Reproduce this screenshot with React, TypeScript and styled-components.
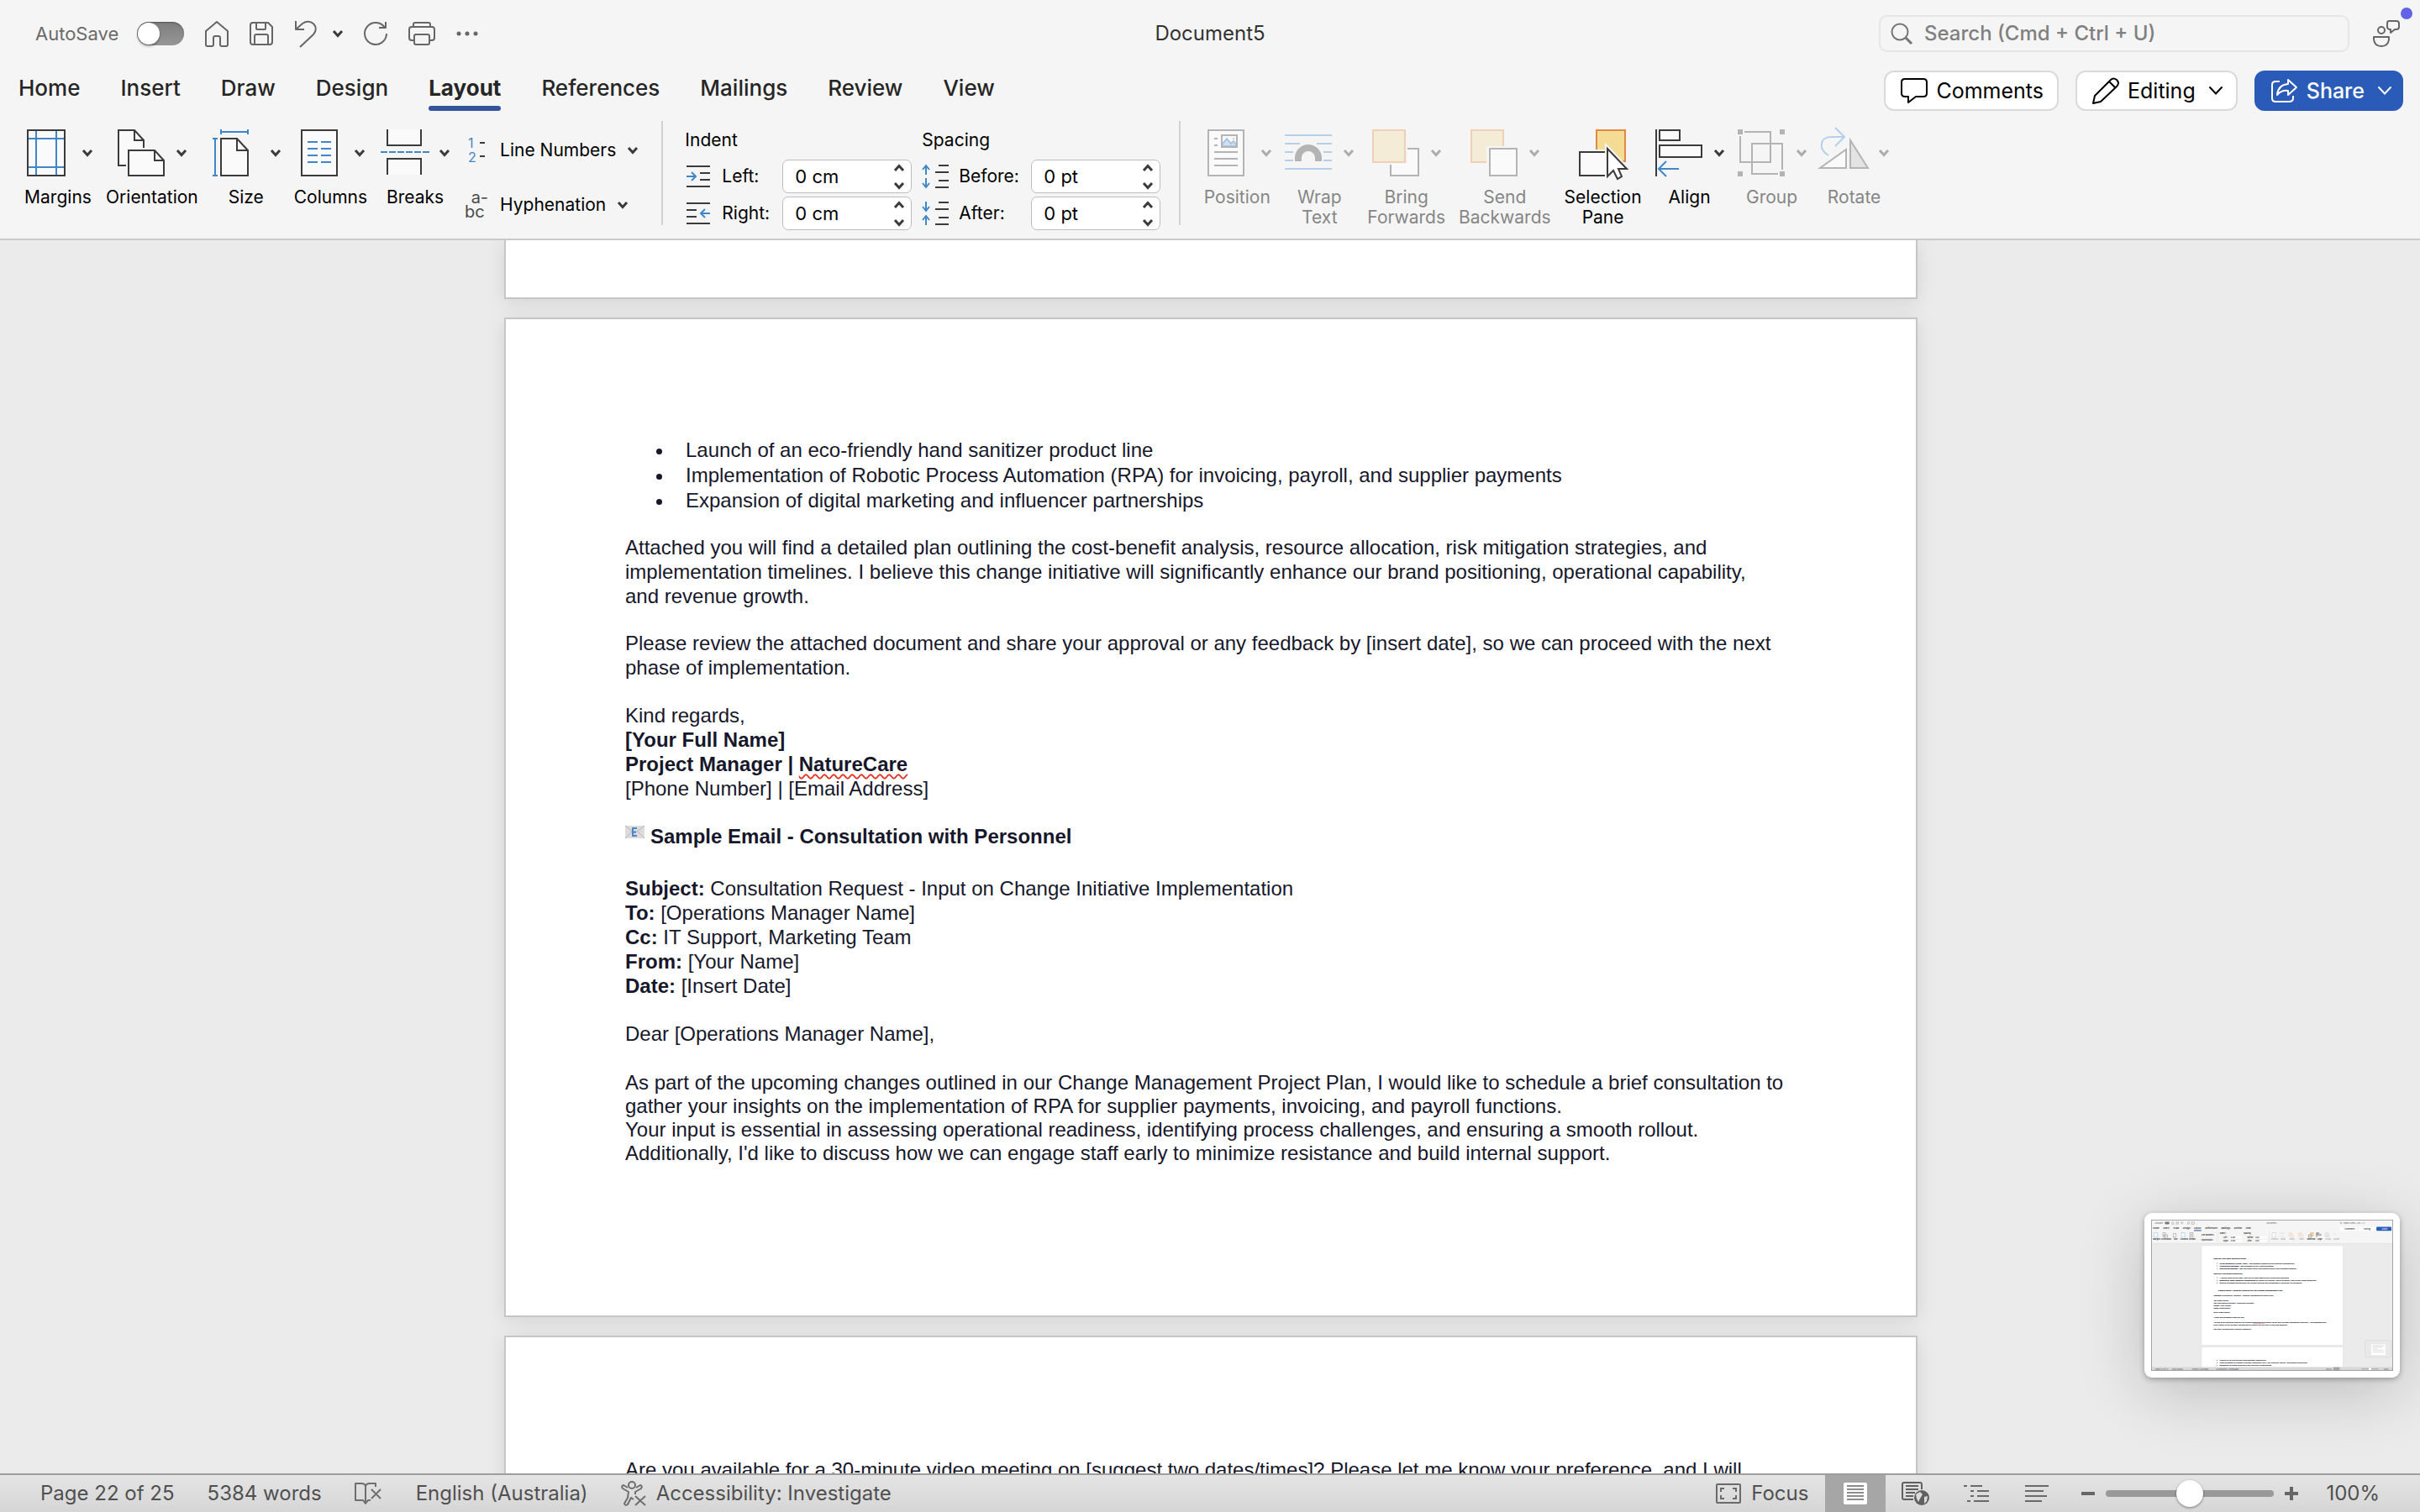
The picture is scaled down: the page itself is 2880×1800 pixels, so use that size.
import React from "react";
import styled, { createGlobalStyle } from "styled-components";

const INK = "#3b3b3b";
const BLUE = "#3f87c9";
const UI_FONT = 'Inter, "Liberation Sans", sans-serif';
const DOC_FONT = '"Liberation Sans", Arial, sans-serif';

const GlobalStyle = createGlobalStyle`
  * { box-sizing: border-box; }
  body { margin: 0; background: #ebebeb; font-family: ${UI_FONT}; }
  button, input { font: inherit; color: inherit; }
  button { background: none; border: 0; padding: 0; }
  svg { display: block; flex: none; overflow: visible; }
`;

/* ---------- shell ---------- */

const Shell = styled.div`
  position: relative;
  display: flex;
  flex-direction: column;
  height: 100vh;
  overflow: hidden;
`;

const Header = styled.header`
  flex: none;
  background: #f5f5f5;
  border-bottom: 2px solid #c9c9c9;
`;

const TitleBar = styled.div`
  display: grid;
  grid-template-columns: 1fr auto 1fr;
  align-items: center;
  height: 80px;
  padding: 0 24px;
`;

const QuickAccess = styled.div`
  display: flex;
  align-items: center;
  gap: 25px;
  padding-left: 18px;
  color: #666;
`;

const AutoSave = styled.label`
  display: flex;
  align-items: center;
  gap: 22px;
  font-size: 22px;
  line-height: 28px;
  color: #6a6a6a;
`;

const Toggle = styled.input`
  appearance: none;
  width: 56px;
  height: 28px;
  margin: 0;
  border-radius: 14px;
  background: linear-gradient(#7d7d7d, #979797);
  box-shadow: inset 0 1px 2px rgba(0, 0, 0, 0.35);
  &::before {
    content: "";
    display: block;
    width: 26px;
    height: 26px;
    margin: 1px;
    border-radius: 50%;
    background: #fff;
    box-shadow: 0 2px 3px rgba(0, 0, 0, 0.35);
  }
`;

const IconButton = styled.button`
  display: flex;
  align-items: center;
  gap: 18px;
`;

const DocTitle = styled.h1`
  margin: 0;
  font-size: 24px;
  line-height: 28px;
  font-weight: 400;
  color: #333;
`;

const TitleRight = styled.div`
  display: flex;
  align-items: center;
  justify-content: flex-end;
  gap: 28px;
`;

const SearchBox = styled.label`
  display: flex;
  align-items: center;
  gap: 14px;
  width: 560px;
  height: 44px;
  padding: 0 12px;
  border: 2px solid #e6e6e6;
  border-radius: 10px;
  color: #757575;
`;

const SearchInput = styled.input`
  flex: 1;
  min-width: 0;
  padding: 0;
  border: 0;
  outline: 0;
  background: none;
  font-size: 24px;
  line-height: 28px;
  font-weight: 500;
  &::placeholder {
    color: #808080;
    opacity: 1;
  }
`;

const Presence = styled.button`
  position: relative;
  color: #666;
`;

const Dot = styled.span`
  position: absolute;
  top: -15px;
  right: -15px;
  width: 14px;
  height: 14px;
  border-radius: 50%;
  background: #6262e6;
`;

/* ---------- tabs ---------- */

const TabBar = styled.div`
  display: flex;
  justify-content: space-between;
  padding: 4px 20px 0 22px;
`;

const Tabs = styled.nav`
  display: flex;
  gap: 48px;
`;

const Tab = styled.button<{ $active?: boolean }>`
  display: flex;
  flex-direction: column;
  gap: 5px;
  padding-top: 5px;
  font-size: 26px;
  line-height: 32px;
  font-weight: ${(p) => (p.$active ? 700 : 500)};
  color: #262626;
  &::after {
    content: "";
    width: 100%;
    height: 6px;
    border-radius: 3px;
    background: ${(p) => (p.$active ? "#34549a" : "transparent")};
  }
`;

const Actions = styled.div`
  display: flex;
  gap: 20px;
`;

const ActionButton = styled.button<{ $primary?: boolean }>`
  display: flex;
  align-items: center;
  gap: 10px;
  height: 48px;
  padding: 0 ${(p) => (p.$primary ? 12 : 16)}px 0 18px;
  border: 2px solid ${(p) => (p.$primary ? "#2b5bb9" : "#dadada")};
  border-radius: 12px;
  background: ${(p) => (p.$primary ? "#2b5bb9" : "#fff")};
  color: ${(p) => (p.$primary ? "#fff" : "#000")};
  font-size: 25px;
  line-height: 32px;
  font-weight: ${(p) => (p.$primary ? 500 : 400)};
  svg + span + svg {
    margin-left: 6px;
  }
`;

/* ---------- ribbon ---------- */

const Ribbon = styled.div`
  display: flex;
  align-items: flex-start;
  padding: 12px 28px 10px;
`;

const ToolGroup = styled.div`
  display: flex;
  gap: 16px;
  padding-top: 10px;
`;

const Tool = styled.button`
  display: flex;
  flex-direction: column;
  align-items: center;
  gap: 13px;
  font-size: 21px;
  line-height: 24px;
  color: #000;
  &:disabled {
    color: #868686;
  }
`;

const ToolFace = styled.span`
  display: flex;
  align-items: center;
  gap: 10px;
`;

const Separator = styled.div`
  flex: none;
  width: 2px;
  height: 124px;
  margin: 0 26px 0 22px;
  background: #d2d2d2;
`;

const SmallTools = styled.div`
  display: flex;
  flex-direction: column;
  align-items: flex-start;
  gap: 33px;
  padding: 19px 6px 0 18px;
`;

const SmallTool = styled.button`
  display: flex;
  align-items: center;
  gap: 14px;
  height: 32px;
  font-size: 21px;
  line-height: 24px;
  color: #000;
`;

const Glyph = styled.span`
  width: 28px;
  font-size: 20px;
  line-height: 17px;
  text-align: right;
  color: #4a4a4a;
  white-space: pre;
`;

const Fields = styled.div`
  display: flex;
  gap: 12px;
  padding-top: 11px;
  font-size: 21px;
  line-height: 24px;
  color: #000;
`;

const FieldGroup = styled.fieldset`
  display: flex;
  flex-direction: column;
  gap: 4px;
  margin: 0;
  padding: 0;
  border: 0;
`;

const Legend = styled.legend`
  padding: 0;
  margin-bottom: 11px;
`;

const Field = styled.div`
  display: flex;
  align-items: center;
`;

const FieldLabel = styled.label<{ $width: number }>`
  width: ${(p) => p.$width}px;
  margin-left: 12px;
`;

const Stepper = styled.div`
  display: flex;
  justify-content: space-between;
  width: 154px;
  height: 40px;
  padding: 0 8px 0 14px;
  border: 1px solid #bdbdbd;
  border-radius: 7px;
  background: #fff;
`;

const StepInput = styled.input`
  width: 100px;
  padding: 0;
  border: 0;
  outline: 0;
  background: none;
  font-size: 22px;
  line-height: 28px;
`;

const StepButtons = styled.div`
  display: flex;
  flex-direction: column;
  justify-content: center;
  gap: 13px;
`;

/* ---------- document ---------- */

const Canvas = styled.main`
  flex: 1;
  min-height: 0;
  overflow: hidden;
  display: flex;
  flex-direction: column;
  align-items: center;
  gap: 22px;
  padding-left: 2px;
  background: #ebebeb;
`;

const Page = styled.article<{ $tail?: boolean }>`
  flex: none;
  width: 1682px;
  max-width: 100%;
  height: ${(p) => (p.$tail ? "70px" : "1190px")};
  padding: ${(p) => (p.$tail ? "0" : "141px 142px")};
  border: 2px solid #c5c5c5;
  border-top-width: ${(p) => (p.$tail ? 0 : 2)}px;
  background: #fff;
  box-shadow: 0 4px 22px rgba(0, 0, 0, 0.1);
  font-family: ${DOC_FONT};
  font-size: 24px;
  line-height: 29px;
  color: #17172b;
  white-space: nowrap;
`;

const Bullets = styled.ul`
  margin: 0;
  padding: 0 0 0 58px;
  line-height: 30px;
`;

const Bullet = styled.li`
  padding-left: 14px;
`;

const Para = styled.p<{ $space?: number; $tight?: boolean }>`
  margin: ${(p) => p.$space ?? 27}px 0 0;
  line-height: ${(p) => (p.$tight ? 28 : 29)}px;
`;

const Heading = styled.h2`
  display: flex;
  gap: 7px;
  margin: 28px 0 0;
  font-size: 24px;
  line-height: 29px;
  font-weight: 700;
`;

const Misspelt = styled.span`
  text-decoration: underline wavy #e0392b 2px;
  text-underline-offset: 3px;
  text-decoration-skip-ink: none;
`;

/* ---------- status bar ---------- */

const StatusBar = styled.footer`
  flex: none;
  display: flex;
  justify-content: space-between;
  height: 46px;
  padding: 0 48px;
  border-top: 2px solid #9e9e9e;
  background: linear-gradient(#e4e4e4, #d6d6d6);
  font-size: 24px;
  line-height: 28px;
  color: #505050;
`;

const StatusSide = styled.div<{ $gap: number }>`
  display: flex;
  align-items: center;
  gap: ${(p) => p.$gap}px;
`;

const StatusButton = styled.button`
  display: flex;
  align-items: center;
  gap: 12px;
`;

const ViewButton = styled.button<{ $active?: boolean }>`
  display: flex;
  align-items: center;
  justify-content: center;
  width: 72px;
  height: 44px;
  background: ${(p) => (p.$active ? "#a6a6a6" : "none")};
`;

const Zoom = styled.div`
  display: flex;
  align-items: center;
  gap: 12px;
`;

const Slider = styled.input`
  appearance: none;
  width: 200px;
  height: 32px;
  margin: 0;
  background: none;
  &::-webkit-slider-runnable-track {
    height: 8px;
    border-radius: 4px;
    background: #999;
  }
  &::-webkit-slider-thumb {
    appearance: none;
    width: 32px;
    height: 32px;
    margin-top: -12px;
    border-radius: 50%;
    background: #fff;
    box-shadow: 0 1px 3px rgba(0, 0, 0, 0.45);
  }
`;

const ZoomValue = styled.span`
  margin-left: 20px;
`;

/* ---------- floating preview ---------- */

const Preview = styled.figure`
  position: absolute;
  right: 24px;
  bottom: 160px;
  width: 304px;
  height: 196px;
  margin: 0;
  padding: 8px;
  border-radius: 9px;
  background: #fff;
  box-shadow: 0 2px 6px rgba(0, 0, 0, 0.3), 0 16px 80px rgba(0, 0, 0, 0.2);
`;

const Drawing = styled.svg`
  overflow: hidden;
`;

/* ---------- icons ---------- */

const Chevron = ({ up, color = INK }: { up?: boolean; color?: string }) => (
  <svg width="12" height="8" fill="none" stroke={color} strokeWidth="3">
    <path d={up ? "M1 7 6 1.5 11 7" : "M1 1 6 6.5 11 1"} />
  </svg>
);

const ThinChevron = ({ color }: { color: string }) => (
  <svg width="16" height="10" fill="none" stroke={color} strokeWidth="2" strokeLinecap="round">
    <path d="M1 1 8 8.500 15 1" />
  </svg>
);

const Box = ({ children, stroke = INK }: { children: React.ReactNode; stroke?: string }) => (
  <svg width="60" height="56" fill="none" stroke={stroke} strokeWidth="2">
    {children}
  </svg>
);

const MarginsIcon = () => (
  <Box>
    <rect x="5" y="1" width="44" height="54" fill="#fafafa" />
    <path stroke={BLUE} d="M15 2V54M39 2V54M6 11H48M6 45H48" />
    <rect x="5" y="1" width="44" height="54" />
  </Box>
);

const OrientationIcon = () => (
  <Box>
    <path fill="#fafafa" stroke="none" d="M10 43H1V1H20L31 13V22Z" />
    <path d="M10 43H1V1H20L31 13V22" />
    <path d="M20 1V13H31" />
    <path fill="#fafafa" d="M13 25H44L55 37V55H13Z" />
    <path d="M44 25V37H55" />
  </Box>
);

const SizeIcon = () => (
  <Box>
    <path stroke={BLUE} d="M11 3H43M11 0V6M43 0V6M4 11V55M1 11H7M1 55H7" />
    <path fill="#fafafa" d="M11 11H30L43 25V55H11Z" />
    <path d="M30 11V25H43" />
  </Box>
);

const ColumnsIcon = () => (
  <Box>
    <rect x="7" y="1" width="42" height="54" fill="#fafafa" />
    <path stroke={BLUE} d="M14 15H26M30 15H42M14 23H26M30 23H42M14 31H26M30 31H42M14 39H26M30 39H42" />
  </Box>
);

const BreaksIcon = () => (
  <Box>
    <path fill="#fafafa" d="M8 0V19H48V0M8 54V35H48V54" />
    <path stroke={BLUE} strokeDasharray="8 2" d="M0 27H58" />
  </Box>
);

const GREY = "#b4b4b4";
const PALE = "#b4cfe9";

const PositionIcon = () => (
  <Box stroke={GREY}>
    <rect x="7" y="1" width="42" height="54" fill="#fafafa" />
    <path d="M14 11H18M14 19H18M14 27H42M14 35H42M14 43H42" />
    <path fill="#cfe0f2" stroke="#a9c6e4" d="M24 20V17L29 11 34 17 37 14 40 18V20Z" />
    <rect x="23" y="7" width="18" height="14" />
    <path stroke="#ecc7a4" d="M36 11H38" />
  </Box>
);

const WrapIcon = () => (
  <Box stroke={PALE}>
    <path d="M0 7H56M0 17H18M38 17H56M0 27H10M46 27H56M0 37H10M46 37H56M0 47H56" />
    <path stroke={GREY} strokeWidth="8" d="M16 38V34A12 12 0 0 1 40 34V38" />
  </Box>
);

const ForwardIcon = () => (
  <Box stroke={GREY}>
    <path fill="#fafafa" stroke="none" d="M22 23H55V55H22Z" />
    <path d="M42 23H55V55H22V42" />
    <rect x="-1" y="-1" width="43" height="42" fill="#f5f5f5" stroke="none" />
    <rect x="1" y="1" width="38" height="38" fill="#f5ecd8" stroke="#efcfb5" />
  </Box>
);

const BackwardIcon = () => (
  <Box stroke={GREY}>
    <path fill="#f5ecd8" stroke="#efcfb5" d="M19 39H1V1H39V20" />
    <path fill="#f5f5f5" stroke="none" d="M19 20H42V42H19Z" />
    <rect x="23" y="23" width="32" height="32" fill="#fafafa" />
  </Box>
);

const SelectionIcon = () => (
  <Box>
    <rect x="22" y="1" width="34" height="37" fill="#f4dc94" stroke="#df8b45" />
    <path fill="#f5f5f5" stroke="none" d="M0 24H36V56H0Z" />
    <path fill="#fafafa" d="M34 55H2V27H34Z" />
    <path fill="#fff" stroke="#f5f5f5" strokeWidth="6" d="M35 23V56L42 49 47 59 52 56 48 47H58Z" />
    <path fill="#fff" d="M35 23V56L42 49 47 59 52 56 48 47H58Z" />
  </Box>
);

const AlignIcon = () => (
  <Box>
    <path d="M1 0V56" />
    <path fill="#fafafa" d="M5 1H29V13H5ZM5 19H55V33H5Z" />
    <path stroke={BLUE} d="M28 47H5M13 38 4 47 13 56" />
  </Box>
);

const GroupIcon = () => (
  <Box stroke={GREY}>
    <path d="M8 3H39V39H3V8M48 53H17V17H53V48" />
    <path fill={GREY} stroke="none" d="M0 0H6V6H0ZM50 0H56V6H50ZM0 50H6V56H0ZM50 50H56V56H50Z" />
  </Box>
);

const RotateIcon = () => (
  <Box stroke={GREY}>
    <path stroke={PALE} d="M10 31C-2 24-1 9 13 9H29M18-2 29 9 18 20" />
    <path fill="#fafafa" d="M0 46H31V24Z" />
    <path fill="#e3e3e3" d="M36 13V46H57Z" />
  </Box>
);

const ParaIcon = ({ kind }: { kind: "left" | "right" | "before" | "after" }) => {
  const bars = {
    left: "M2 2H30M18 10H30M18 18H30M2 26H30",
    right: "M2 2H30M2 10H14M2 18H14M2 26H30",
    before: "M20 1H32M16 9H32M20 19H32M16 27H32",
    after: "M20 1H32M16 9H32M20 19H32M16 27H32",
  }[kind];
  const arrows = {
    left: "M2 14H13M8 9 13 14 8 19",
    right: "M30 14H19M24 9 19 14 24 19",
    before: "M5 12V1M1 6 5 1 9 6M5 16V27M1 22 5 27 9 22",
    after: "M5 0V11M1 6 5 11 9 6M5 28V17M1 22 5 17 9 22",
  }[kind];
  return (
    <svg width="32" height="28" fill="none" stroke={INK} strokeWidth="2">
      <path d={bars} />
      <path d={arrows} stroke={BLUE} />
    </svg>
  );
};

const line = { fill: "none", stroke: "currentColor", strokeWidth: 2, strokeLinejoin: "round" as const };

/* ---------- preview drawing ---------- */

type Mark = [x: number, y: number, bold: string, rest?: string];

const previewLines: Mark[] = [
  [744, 473, "Who will you seek approval from?"],
  [816, 527, "Chief Executive Officer (CEO)", " - For strategic alignment and financial endorsement"],
  [816, 557, "Operations Manager", " - For feasibility of RPA implementation"],
  [816, 589, "Marketing Manager", " - For execution of the new product launch and campaign strategy"],
  [744, 647, "How will you obtain approval?"],
  [816, 700, "", "A formal email to the CEO, with the full plan attached for review and comment"],
  [816, 730, "Executive Team Meeting Presentation", " to explain key points, collect feedback, and record verbal approvals"],
  [816, 762, "", "Shared Microsoft Teams folder for version tracking and collaborative input from all managers"],
  [798, 850, "Sample Email - Seeking Approval for the Change Management Plan"],
  [744, 907, "Subject:", " Request for Approval - Change Management Project Plan"],
  [744, 967, "To:", " [CEO Name]"],
  [744, 997, "Cc:", " Operations Manager, Marketing Manager"],
  [744, 1027, "From:", " [Your Name]"],
  [744, 1057, "Date:", " [Insert Date]"],
  [744, 1113, "", "Dear [CEO Name],"],
  [744, 1170, "", "I hope this message finds you well."],
  [744, 1230, "", "As part of our strategic objective to expand NatureCare's product range and increase operational efficiency, I am submitting the"],
  [744, 1257, "", "final version of our Change Management Project Plan for your review and approval."],
  [744, 1313, "", "The plan includes three primary initiatives:"],
  [816, 1683, "", "Launch of an eco-friendly hand sanitizer product line"],
  [816, 1713, "", "Implementation of Robotic Process Automation (RPA) for invoicing, payroll, and supplier payments"],
  [816, 1743, "", "Expansion of digital marketing and influencer partnerships"],
];

const previewTools: [number, string, boolean][] = [
  [66, "Margins", true], [180, "Orientation", true], [292, "Size", true], [393, "Columns", true], [490, "Breaks", true],
  [1471, "Position", false], [1571, "Wrap", false], [1675, "Bring", false], [1790, "Send", false],
  [1904, "Selection", true], [2006, "Align", true], [2106, "Group", false], [2206, "Rotate", false],
];

const previewTabs: [number, string][] = [
  [22, "Home"], [144, "Insert"], [266, "Draw"], [378, "Design"], [510, "Layout"],
  [646, "References"], [836, "Mailings"], [988, "Review"], [1125, "View"],
];

const PreviewDrawing = () => (
  <Drawing width="288" height="180" viewBox="0 0 2880 1800" fontFamily={UI_FONT}>
    <rect width="2880" height="1800" fill="#ebebeb" />
    <rect width="2880" height="284" fill="#f5f5f5" />
    <g fontSize="22" fill="#555">
      <text x="42" y="48">AutoSave</text>
      <text x="1374" y="48">Document5</text>
      <text x="2291" y="48">Search (Cmd + Ctrl + U)</text>
    </g>
    <rect x="162" y="26" width="56" height="28" rx="14" fill="#777" />
    <g fill="none" stroke="#777" strokeWidth="4">
      <path d="M246 54V36L258 26 270 36V54ZM300 28H324V52H300ZM356 28V40H368M358 38C380 16 388 40 364 54" />
      <circle cx="446" cy="40" r="13" />
      <rect x="486" y="30" width="28" height="22" />
      <circle cx="2260" cy="38" r="9" />
    </g>
    <g fontSize="26" fill="#222" fontWeight="600">
      {previewTabs.map(([x, name]) => (
        <text key={name} x={x} y="114">{name}</text>
      ))}
    </g>
    <rect x="510" y="124" width="88" height="10" fill="#34549a" />
    <g fontSize="24">
      <rect x="2240" y="84" width="210" height="48" rx="10" fill="#fff" />
      <rect x="2470" y="84" width="192" height="48" rx="10" fill="#fff" />
      <rect x="2682" y="84" width="178" height="48" rx="8" fill="#2b5bb9" />
      <text x="2303" y="116">Comments</text>
      <text x="2533" y="116">Editing</text>
      <text x="2745" y="116" fill="#fff">Share</text>
    </g>
    <g fill="#fafafa" stroke="#666" strokeWidth="4">
      <path stroke="#7fa9d4" d="M33 155H77V209H33ZM360 155H402V209H360Z" />
      <path d="M141 155H170V197H141ZM153 179H195V209H153ZM264 165H296V209H264ZM460 155H500V173H460ZM460 189H500V209H460Z" />
      <path stroke="#bbb" d="M1440 155H1482V209H1440ZM1657 177H1690V209H1657ZM1772 177H1804V209H1772ZM2070 157H2106V193H2070ZM2084 171H2120V207H2084Z" />
      <path stroke="#efcfb5" fill="#f5ecd8" d="M1636 155H1674V192H1636ZM1750 155H1788V180H1770V192H1750Z" />
      <path stroke="#df8b45" fill="#f4dc94" d="M1896 155H1930V192H1896Z" />
      <path stroke="#333" d="M1876 181H1908V209H1876ZM1968 154V210M1972 155H1996V167H1972ZM1972 173H2022V187H1972Z" />
      <path stroke="#b4cfe9" d="M1533 161H1589M1533 201H1589M2168 172H2196" />
    </g>
    <g fontSize="22" textAnchor="middle" fontWeight="600">
      {previewTools.map(([x, name, on]) => (
        <text key={name} x={x} y="241" fill={on ? "#111" : "#aaa"}>{name}</text>
      ))}
    </g>
    <g fill="#fff" stroke="#ddd" strokeWidth="2">
      <path d="M933 190H1087V230H933ZM933 234H1087V274H933ZM1229 190H1383V230H1229ZM1229 234H1383V274H1229Z" />
    </g>
    <g fontSize="22" fill="#222" fontWeight="600">
      <text x="597" y="185">Line Numbers</text>
      <text x="597" y="250">Hyphenation</text>
      <text x="817" y="174">Indent</text>
      <text x="1100" y="174">Spacing</text>
      <text x="861" y="218">Left:</text>
      <text x="861" y="262">Right:</text>
      <text x="1144" y="218">Before:</text>
      <text x="1144" y="262">After:</text>
      <text x="948" y="218">0 cm</text>
      <text x="948" y="262">0 cm</text>
      <text x="1243" y="218">0 pt</text>
      <text x="1243" y="262">0 pt</text>
    </g>
    <path stroke="#ccc" strokeWidth="3" d="M789 144V268M1405 144V268M0 284H2880" />
    <g fill="#fff" stroke="#ddd" strokeWidth="4">
      <rect x="600" y="310" width="1682" height="1182" />
      <rect x="600" y="1516" width="1682" height="300" />
    </g>
    <g fontSize="24" fill="#17172b" stroke="#17172b" strokeWidth="1" fontFamily={DOC_FONT}>
      {previewLines.map(([x, y, bold, rest]) => (
        <text key={y} x={x} y={y}>
          <tspan fontWeight="700">{bold}</tspan>
          {rest}
        </text>
      ))}
      {previewLines.filter(([x]) => x === 816).map(([, y]) => (
        <circle key={y} cx="786" cy={y - 8} r="4" />
      ))}
    </g>
    <path stroke="#e0392b" strokeWidth="4" d="M1218 1236H1350" />
    <rect y="1754" width="2880" height="46" fill="#d8d8d8" />
    <g fontSize="23" fill="#555">
      <text x="48" y="1786">Page 22 of 25</text>
      <text x="247" y="1786">5384 words</text>
      <text x="488" y="1786">English (Australia)</text>
      <text x="773" y="1786">Accessibility: Investigate</text>
      <text x="2081" y="1786">Focus</text>
      <text x="2768" y="1786">100%</text>
    </g>
    <rect x="2170" y="1756" width="74" height="44" fill="#a6a6a6" />
    <rect x="2504" y="1774" width="200" height="8" fill="#999" />
    <circle cx="2604" cy="1777" r="16" fill="#fff" />
    <rect x="2547" y="1437" width="313" height="200" rx="10" fill="#e9e9e9" stroke="#d5d5d5" strokeWidth="6" />
    <rect x="2620" y="1484" width="168" height="128" fill="#fff" />
    <path stroke="#aaa" strokeWidth="4" d="M2636 1500H2770M2636 1516H2750M2636 1536H2700M2636 1556H2764M2636 1576H2770" />
    <rect x="4" y="4" width="2872" height="1792" fill="none" stroke="#999" strokeWidth="9" />
  </Drawing>
);

/* ---------- parts ---------- */

const RibbonTool = ({ icon, label, off, menu = true }: { icon: React.ReactNode; label: string[]; off?: boolean; menu?: boolean }) => (
  <Tool type="button" disabled={off}>
    <ToolFace>
      {icon}
      {menu && <Chevron color={off ? "#acacac" : INK} />}
    </ToolFace>
    <span>
      {label.map((word, i) => (
        <React.Fragment key={word}>
          {i > 0 && <br />}
          {word}
        </React.Fragment>
      ))}
    </span>
  </Tool>
);

const StepField = ({ id, kind, label, width, value }: { id: string; kind: "left" | "right" | "before" | "after"; label: string; width: number; value: string }) => (
  <Field>
    <ParaIcon kind={kind} />
    <FieldLabel htmlFor={id} $width={width}>{label}</FieldLabel>
    <Stepper>
      <StepInput id={id} type="text" defaultValue={value} />
      <StepButtons>
        <button type="button" aria-label={`Increase ${label}`}><Chevron up /></button>
        <button type="button" aria-label={`Decrease ${label}`}><Chevron /></button>
      </StepButtons>
    </Stepper>
  </Field>
);

const tabNames = ["Home", "Insert", "Draw", "Design", "Layout", "References", "Mailings", "Review", "View"];

export default function App() {
  return (
    <Shell>
      <GlobalStyle />
      <Header>
        <TitleBar>
          <QuickAccess>
            <AutoSave>
              AutoSave
              <Toggle type="checkbox" role="switch" />
            </AutoSave>
            <IconButton type="button" aria-label="Home">
              <svg width="28" height="32" {...line}>
                <path d="M1 13 14 2 27 13V29Q27 31 25 31H20Q18 31 18 29V21Q18 19 16 19H12Q10 19 10 21V29Q10 31 8 31H3Q1 31 1 29Z" />
              </svg>
            </IconButton>
            <IconButton type="button" aria-label="Save">
              <svg width="28" height="28" {...line}>
                <path d="M4 1H22L27 6V24Q27 27 24 27H4Q1 27 1 24V4Q1 1 4 1ZM8 1V8Q8 9 9 9H18Q19 9 19 8V1M6 27V17Q6 15 8 15H20Q22 15 22 17V27" />
              </svg>
            </IconButton>
            <IconButton type="button" aria-label="Undo">
              <svg width="28" height="32" {...line}>
                <path d="M2 1V11H12M2 11 10 4C20-3 31 8 23 17L7 32" />
              </svg>
              <Chevron />
            </IconButton>
            <IconButton type="button" aria-label="Repeat">
              <svg width="28" height="28" {...line}>
                <path d="M26 0V7H18M25 7A13 13 0 1 0 27 14" />
              </svg>
            </IconButton>
            <IconButton type="button" aria-label="Print">
              <svg width="32" height="28" {...line}>
                <path d="M6 6V3Q6 1 8 1H24Q26 1 26 3V6M7 22H4Q1 22 1 19V9Q1 6 4 6H28Q31 6 31 9V19Q31 22 28 22H25" />
                <rect x="7" y="15" width="18" height="12" rx="2" />
              </svg>
            </IconButton>
            <IconButton type="button" aria-label="More">
              <svg width="26" height="6" fill="currentColor">
                <circle cx="3" cy="3" r="2.500" />
                <circle cx="13" cy="3" r="2.500" />
                <circle cx="23" cy="3" r="2.500" />
              </svg>
            </IconButton>
          </QuickAccess>
          <DocTitle>Document5</DocTitle>
          <TitleRight>
            <SearchBox>
              <svg width="26" height="26" fill="none" stroke="currentColor" strokeWidth="2">
                <circle cx="11" cy="11" r="9.500" />
                <path strokeWidth="3" d="M18 18 25 25" />
              </svg>
              <SearchInput type="search" placeholder="Search (Cmd + Ctrl + U)" aria-label="Search" />
            </SearchBox>
            <Presence type="button" aria-label="Collaboration">
              <svg width="32" height="32" {...line}>
                <circle cx="10" cy="12" r="4" />
                <path d="M1 20H19V23Q18 31 10 31Q2 31 1 23ZM19 1H28Q31 1 31 4V8Q31 11 28 11H26L21 15V11Q17 11 17 8V4Q17 1 19 1Z" />
              </svg>
              <Dot />
            </Presence>
          </TitleRight>
        </TitleBar>

        <TabBar>
          <Tabs>
            {tabNames.map((name) => (
              <Tab key={name} type="button" $active={name === "Layout"}>{name}</Tab>
            ))}
          </Tabs>
          <Actions>
            <ActionButton type="button">
              <svg width="32" height="30" {...line}>
                <path d="M5 1H27Q31 1 31 5V18Q31 22 27 22H18L9 29V22H5Q1 22 1 18V5Q1 1 5 1Z" />
              </svg>
              <span>Comments</span>
            </ActionButton>
            <ActionButton type="button">
              <svg width="32" height="32" {...line}>
                <path d="M1 31 3 22 22 3Q25 0 29 3Q33 7 29 11L10 29ZM20 5 27 12" />
              </svg>
              <span>Editing</span>
              <ThinChevron color="#000" />
            </ActionButton>
            <ActionButton type="button" $primary>
              <svg width="32" height="28" {...line}>
                <path d="M10 3H5Q1 3 1 7V23Q1 27 5 27H21Q26 27 26 23V20M20 1 30 10 20 19V14Q12 13 7 19Q8 7 20 6Z" />
              </svg>
              <span>Share</span>
              <ThinChevron color="#fff" />
            </ActionButton>
          </Actions>
        </TabBar>

        <Ribbon>
          <ToolGroup>
            <RibbonTool icon={<MarginsIcon />} label={["Margins"]} />
            <RibbonTool icon={<OrientationIcon />} label={["Orientation"]} />
            <RibbonTool icon={<SizeIcon />} label={["Size"]} />
            <RibbonTool icon={<ColumnsIcon />} label={["Columns"]} />
            <RibbonTool icon={<BreaksIcon />} label={["Breaks"]} />
          </ToolGroup>
          <SmallTools>
            <SmallTool type="button">
              <svg width="28" height="32" fontFamily={UI_FONT} fontSize="16" fill={BLUE}>
                <text x="4" y="13">1</text>
                <text x="4" y="30">2</text>
                <path stroke={INK} strokeWidth="2" d="M18 7H24M18 23H24" />
              </svg>
              Line Numbers
              <Chevron />
            </SmallTool>
            <SmallTool type="button">
              <Glyph>{"a-\nbc "}</Glyph>
              Hyphenation
              <Chevron />
            </SmallTool>
          </SmallTools>
          <Separator />
          <Fields>
            <FieldGroup>
              <Legend>Indent</Legend>
              <StepField id="indent-left" kind="left" label="Left:" width={72} value="0 cm" />
              <StepField id="indent-right" kind="right" label="Right:" width={72} value="0 cm" />
            </FieldGroup>
            <FieldGroup>
              <Legend>Spacing</Legend>
              <StepField id="space-before" kind="before" label="Before:" width={86} value="0 pt" />
              <StepField id="space-after" kind="after" label="After:" width={86} value="0 pt" />
            </FieldGroup>
          </Fields>
          <Separator />
          <ToolGroup>
            <RibbonTool icon={<PositionIcon />} label={["Position"]} off />
            <RibbonTool icon={<WrapIcon />} label={["Wrap", "Text"]} off />
            <RibbonTool icon={<ForwardIcon />} label={["Bring", "Forwards"]} off />
            <RibbonTool icon={<BackwardIcon />} label={["Send", "Backwards"]} off />
            <RibbonTool icon={<SelectionIcon />} label={["Selection", "Pane"]} menu={false} />
            <RibbonTool icon={<AlignIcon />} label={["Align"]} />
            <RibbonTool icon={<GroupIcon />} label={["Group"]} off />
            <RibbonTool icon={<RotateIcon />} label={["Rotate"]} off />
          </ToolGroup>
        </Ribbon>
      </Header>

      <Canvas>
        <Page $tail />
        <Page>
          <Bullets>
            <Bullet>Launch of an eco-friendly hand sanitizer product line</Bullet>
            <Bullet>Implementation of Robotic Process Automation (RPA) for invoicing, payroll, and supplier payments</Bullet>
            <Bullet>Expansion of digital marketing and influencer partnerships</Bullet>
          </Bullets>
          <Para $space={26}>
            Attached you will find a detailed plan outlining the cost-benefit analysis, resource allocation, risk mitigation strategies, and<br />
            implementation timelines. I believe this change initiative will significantly enhance our brand positioning, operational capability,<br />
            and revenue growth.
          </Para>
          <Para>
            Please review the attached document and share your approval or any feedback by [insert date], so we can proceed with the next<br />
            phase of implementation.
          </Para>
          <Para $space={28}>
            Kind regards,<br />
            <strong>[Your Full Name]</strong><br />
            <strong>Project Manager | <Misspelt>NatureCare</Misspelt></strong><br />
            [Phone Number] | [Email Address]
          </Para>
          <Heading>
            <svg width="23" height="22" fill="none">
              <rect y="2" width="23" height="15" fill="#dcdcdc" />
              <path stroke="#b5b5b5" d="M0 2 11.500 11 23 2M0 17 8 9M23 17 15 9" />
              <path stroke="#4a86cf" strokeWidth="2" d="M14 5H9V14H14M9 9.500H13" />
            </svg>
            Sample Email - Consultation with Personnel
          </Heading>
          <Para $space={33}>
            <strong>Subject:</strong> Consultation Request - Input on Change Initiative Implementation<br />
            <strong>To:</strong> [Operations Manager Name]<br />
            <strong>Cc:</strong> IT Support, Marketing Team<br />
            <strong>From:</strong> [Your Name]<br />
            <strong>Date:</strong> [Insert Date]
          </Para>
          <Para $space={28}>Dear [Operations Manager Name],</Para>
          <Para $space={30} $tight>
            As part of the upcoming changes outlined in our Change Management Project Plan, I would like to schedule a brief consultation to<br />
            gather your insights on the implementation of RPA for supplier payments, invoicing, and payroll functions.<br />
            Your input is essential in assessing operational readiness, identifying process challenges, and ensuring a smooth rollout.<br />
            Additionally, I'd like to discuss how we can engage staff early to minimize resistance and build internal support.
          </Para>
        </Page>
        <Page>
          <Para $space={2}>
            Are you available for a 30-minute video meeting on [suggest two dates/times]? Please let me know your preference, and I will
          </Para>
        </Page>
      </Canvas>

      <StatusBar>
        <StatusSide $gap={39}>
          <span>Page 22 of 25</span>
          <span>5384 words</span>
          <StatusButton type="button" aria-label="Proofing">
            <svg width="34" height="28" {...line} stroke="#6e6e6e">
              <path d="M13 25V5Q12 2 8 2H1V22H10L13 26 16 22H19M13 5Q14 2 18 2H25V6M20 9 31 20M31 9 20 20" />
            </svg>
          </StatusButton>
          <span>English (Australia)</span>
          <StatusButton type="button">
            <svg width="30" height="30" {...line} stroke="#6e6e6e">
              <circle cx="13" cy="5" r="4" />
              <path d="M8 8 3 5Q0 6 2 9L9 13 8 20 4 27Q5 30 8 28L12 20 15 22M18 8 23 5Q26 6 24 9L17 13V16M17 18 29 29M29 18 17 29" />
            </svg>
            Accessibility: Investigate
          </StatusButton>
        </StatusSide>
        <StatusSide $gap={16}>
          <StatusSide $gap={20}>
            <StatusButton type="button">
              <svg width="30" height="24" fill="none" stroke="#6a6a6a" strokeWidth="2">
                <rect x="1" y="1" width="28" height="22" rx="1" />
                <path d="M6 10V6H10M20 6H24V10M24 14V18H20M10 18H6V14" />
              </svg>
              Focus
            </StatusButton>
            <StatusSide $gap={0}>
              <ViewButton type="button" $active aria-label="Print layout">
                <svg width="28" height="26">
                  <rect width="28" height="26" rx="2" fill="#fff" />
                  <path stroke="#8c8c8c" strokeWidth="2" d="M4 4H24M4 8H24M4 12H24M4 16H24M4 20H24" />
                </svg>
              </ViewButton>
              <ViewButton type="button" aria-label="Web layout">
                <svg width="34" height="28" fill="none" stroke="#606060" strokeWidth="2">
                  <path d="M14 21H3Q1 21 1 19V3Q1 1 3 1H22Q24 1 24 3V9M5 5H20M5 9H20M5 13H16M5 17H14" />
                  <circle cx="24" cy="19" r="9" fill="#606060" stroke="none" />
                  <path fill="#dcdcdc" stroke="none" d="M17 15 22 12 25 15 22 20 20 24 18 20ZM27 18 31 17 30 23 27 26Z" />
                </svg>
              </ViewButton>
              <ViewButton type="button" aria-label="Outline">
                <svg width="30" height="20" stroke="#6a6a6a" strokeWidth="2">
                  <path d="M0 1H4M8 1H22M8 7H12M16 7H30M8 13H12M16 13H30M4 19H8M12 19H30" />
                </svg>
              </ViewButton>
              <ViewButton type="button" aria-label="Draft">
                <svg width="28" height="20" stroke="#6a6a6a" strokeWidth="2">
                  <path d="M0 1H28M0 7H22M0 13H26M0 19H20" />
                </svg>
              </ViewButton>
            </StatusSide>
          </StatusSide>
          <Zoom>
            <button type="button" aria-label="Zoom out">
              <svg width="18" height="18" stroke="#666" strokeWidth="4"><path d="M1 9H17" /></svg>
            </button>
            <Slider type="range" min="0" max="100" defaultValue="50" aria-label="Zoom" />
            <button type="button" aria-label="Zoom in">
              <svg width="18" height="18" stroke="#666" strokeWidth="4"><path d="M1 9H17M9 1V17" /></svg>
            </button>
            <ZoomValue>100%</ZoomValue>
          </Zoom>
        </StatusSide>
      </StatusBar>

      <Preview aria-label="Screen preview">
        <PreviewDrawing />
      </Preview>
    </Shell>
  );
}
